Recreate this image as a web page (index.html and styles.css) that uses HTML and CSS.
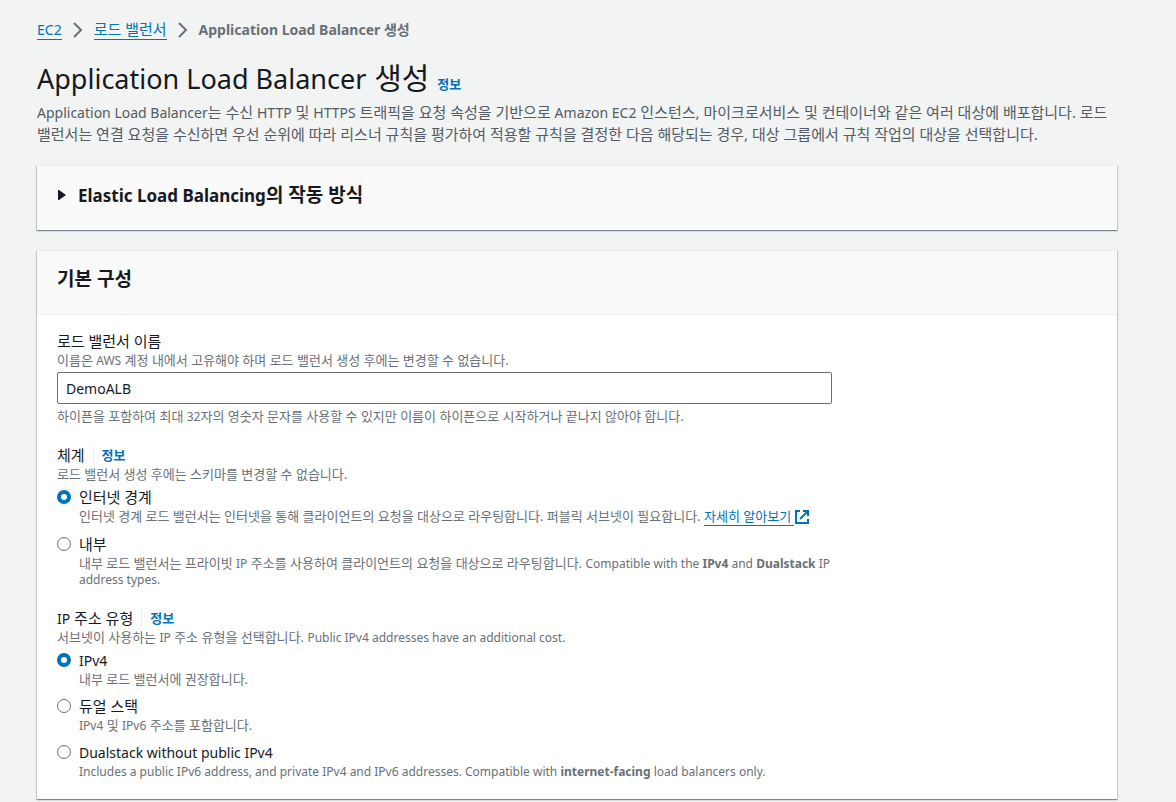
FILE: index.html
```html
<!DOCTYPE html>
<html lang="ko">
<head>
<meta charset="utf-8">
<meta name="viewport" content="width=device-width, initial-scale=1">
<title>Application Load Balancer 생성</title>
<link rel="stylesheet" href="styles.css">
</head>
<body>
<main class="page">
  <nav class="breadcrumbs" aria-label="Breadcrumb">
    <a class="link" href="#"><span class="en">EC2</span></a>
    <svg class="chevron" viewBox="0 0 16 16" aria-hidden="true"><path d="M4 1l7 7-7 7"/></svg>
    <a class="link" href="#">로드 밸런서</a>
    <svg class="chevron" viewBox="0 0 16 16" aria-hidden="true"><path d="M4 1l7 7-7 7"/></svg>
    <span class="current">Application Load Balancer 생성</span>
  </nav>

  <header class="intro">
    <h1 class="title"><span class="title-en">Application Load Balancer</span> 생성 <a class="info" href="#">정보</a></h1>
    <p class="lead"><span class="en">Application Load Balancer</span>는 수신 <span class="en">HTTP</span> 및 <span class="en">HTTPS</span> 트래픽을 요청 속성을 기반으로 <span class="en">Amazon EC2</span> 인스턴스, 마이크로서비스 및 컨테이너와 같은 여러 대상에 배포합니다. 로드 밸런서는 연결 요청을 수신하면 우선 순위에 따라 리스너 규칙을 평가하여 적용할 규칙을 결정한 다음 해당되는 경우, 대상 그룹에서 규칙 작업의 대상을 선택합니다.</p>
  </header>

  <section class="card">
    <button class="expander" type="button" aria-expanded="false">
      <svg class="caret" viewBox="0 0 10 12" aria-hidden="true"><path d="M1 1h1l7 5-7 5H1z"/></svg>
      <span><span class="expander-en">Elastic Load Balancing</span>의 작동 방식</span>
    </button>
  </section>

  <section class="card">
    <h2 class="card-title">기본 구성</h2>
    <form class="form">
      <div class="field">
        <label class="label" for="lb-name">로드 밸런서 이름</label>
        <p class="hint">이름은 <span class="small-en">AWS</span> 계정 내에서 고유해야 하며 로드 밸런서 생성 후에는 변경할 수 없습니다.</p>
        <input class="text-input" id="lb-name" type="text" value="DemoALB">
        <p class="hint">하이픈을 포함하여 최대 <span class="small-en">32</span>자의 영숫자 문자를 사용할 수 있지만 이름이 하이픈으로 시작하거나 끝나지 않아야 합니다.</p>
      </div>

      <div class="field" role="radiogroup" aria-labelledby="scheme">
        <div class="label-row"><span class="label" id="scheme">체계</span><a class="info divided" href="#">정보</a></div>
        <p class="hint">로드 밸런서 생성 후에는 스키마를 변경할 수 없습니다.</p>
        <div class="options">
          <div class="option">
            <input class="radio" type="radio" name="scheme" id="internet" checked>
            <div><label class="label" for="internet">인터넷 경계</label>
            <p class="hint">인터넷 경계 로드 밸런서는 인터넷을 통해 클라이언트의 요청을 대상으로 라우팅합니다. 퍼블릭 서브넷이 필요합니다. <a class="external-link" href="#"><span class="link">자세히 알아보기 </span><svg class="external" viewBox="0 0 16 16" aria-hidden="true"><path d="M6 2H2v12h12v-4M9 2h5v5M13 3L6 10"/></svg></a></p></div>
          </div>
          <div class="option">
            <input class="radio" type="radio" name="scheme" id="internal">
            <div><label class="label" for="internal">내부</label>
            <p class="hint">내부 로드 밸런서는 프라이빗 <span class="small-en">IP</span> 주소를 사용하여 클라이언트의 요청을 대상으로 라우팅합니다. <span class="small-en">Compatible with the <b>IPv4</b> and <b>Dualstack</b> IP address types.</span></p></div>
          </div>
        </div>
      </div>

      <div class="field" role="radiogroup" aria-labelledby="iptype">
        <div class="label-row"><span class="label" id="iptype"><span class="en">IP</span> 주소 유형</span><a class="info divided" href="#">정보</a></div>
        <p class="hint">서브넷이 사용하는 <span class="small-en">IP</span> 주소 유형을 선택합니다. <span class="small-en">Public IPv4 addresses have an additional cost.</span></p>
        <div class="options">
          <div class="option">
            <input class="radio" type="radio" name="iptype" id="ipv4" checked>
            <div><label class="label" for="ipv4"><span class="en">IPv4</span></label>
            <p class="hint">내부 로드 밸런서에 권장합니다.</p></div>
          </div>
          <div class="option">
            <input class="radio" type="radio" name="iptype" id="dual">
            <div><label class="label" for="dual">듀얼 스택</label>
            <p class="hint"><span class="small-en">IPv4</span> 및 <span class="small-en">IPv6</span> 주소를 포함합니다.</p></div>
          </div>
          <div class="option">
            <input class="radio" type="radio" name="iptype" id="dual-private">
            <div><label class="label" for="dual-private"><span class="en">Dualstack without public IPv4</span></label>
            <p class="hint"><span class="small-en">Includes a public IPv6 address, and private IPv4 and IPv6 addresses. Compatible with <b>internet-facing</b> load balancers only.</span></p></div>
          </div>
        </div>
      </div>
    </form>
  </section>
</main>
</body>
</html>
```

FILE: styles.css
```css
* { box-sizing: border-box; }
body {
  margin: 0;
  background: #f2f3f3;
  color: #16191f;
  font-family: "Noto Sans", "Noto Sans CJK KR", sans-serif;
  font-size: 15px;
  line-height: 22px;
}
h1, h2, p { margin: 0; }

/* Latin runs are set one size below the Korean text around them */
.en { font-size: 14px; line-height: 1; }
.small-en { font-size: 12px; line-height: 1; }
.title-en { font-size: 27px; line-height: 1; }
.expander-en { font-size: 17px; line-height: 1; }

.page { padding: 19px 59px 20px 37px; }
.breadcrumbs { display: flex; align-items: center; gap: 8px; }
.link { color: #0073bb; text-decoration: none; border-bottom: 1px solid #0073bb; }
.breadcrumbs .link { line-height: 19px; }
.chevron { width: 16px; height: 16px; fill: none; stroke: #687078; stroke-width: 2; }
.current { color: #687078; font-size: 14px; font-weight: 700; }

.intro { margin-top: 18px; }
.title { font-size: 30px; line-height: 38px; font-weight: 400; }
.info { color: #0073bb; font-size: 13px; line-height: 18px; font-weight: 700; text-decoration: none; }
.lead { margin-top: 4px; color: #545b64; }

.card {
  margin-top: 20px;
  background: #fff;
  border-top: 1px solid #eaeded;
  box-shadow: 0 1px 1px 0 rgba(0, 28, 36, 0.3), 1px 1px 1px 0 rgba(0, 28, 36, 0.15), -1px 1px 1px 0 rgba(0, 28, 36, 0.15);
}
.expander {
  display: flex; align-items: center; gap: 11px;
  width: 100%; padding: 17px 20px 23px;
  border: 0; background: #fafafa; color: #16191f;
  font: inherit; font-size: 19px; line-height: 24px; font-weight: 700; text-align: left;
}
.caret { width: 10px; height: 12px; fill: #16191f; }
.card-title {
  padding: 16px 20px 23px;
  background: #fafafa;
  border-bottom: 1px solid #eaeded;
  font-size: 19px; line-height: 24px;
}

.form { display: flex; flex-direction: column; gap: 20px; padding: 15px 20px 20px; }
.field { width: calc(75% - 5px); }
.label { display: block; line-height: 22px; }
.hint { color: #687078; font-size: 13px; line-height: 16px; }
.label-row { display: flex; align-items: center; }
.divided { margin-left: 8px; padding-left: 8px; border-left: 1px solid #eaeded; }
.text-input {
  display: block; width: 100%; height: 32px; margin: 4px 0; padding: 0 8px;
  border: 1px solid #687078; border-radius: 2px; background: #fff;
  color: #16191f; font: inherit; font-size: 14px;
}
.options { display: flex; flex-direction: column; gap: 8px; margin-top: 4px; }
.option { display: flex; gap: 8px; }
.radio {
  appearance: none; flex: none; width: 14px; height: 14px; margin: 4px 0 0;
  border: 1px solid #687078; border-radius: 50%; background: #fff;
}
.radio:checked { border: 4px solid #0073bb; }
.external-link { text-decoration: none; white-space: nowrap; }
.external { width: 16px; height: 16px; vertical-align: bottom; fill: none; stroke: #0073bb; stroke-width: 2; }
```
